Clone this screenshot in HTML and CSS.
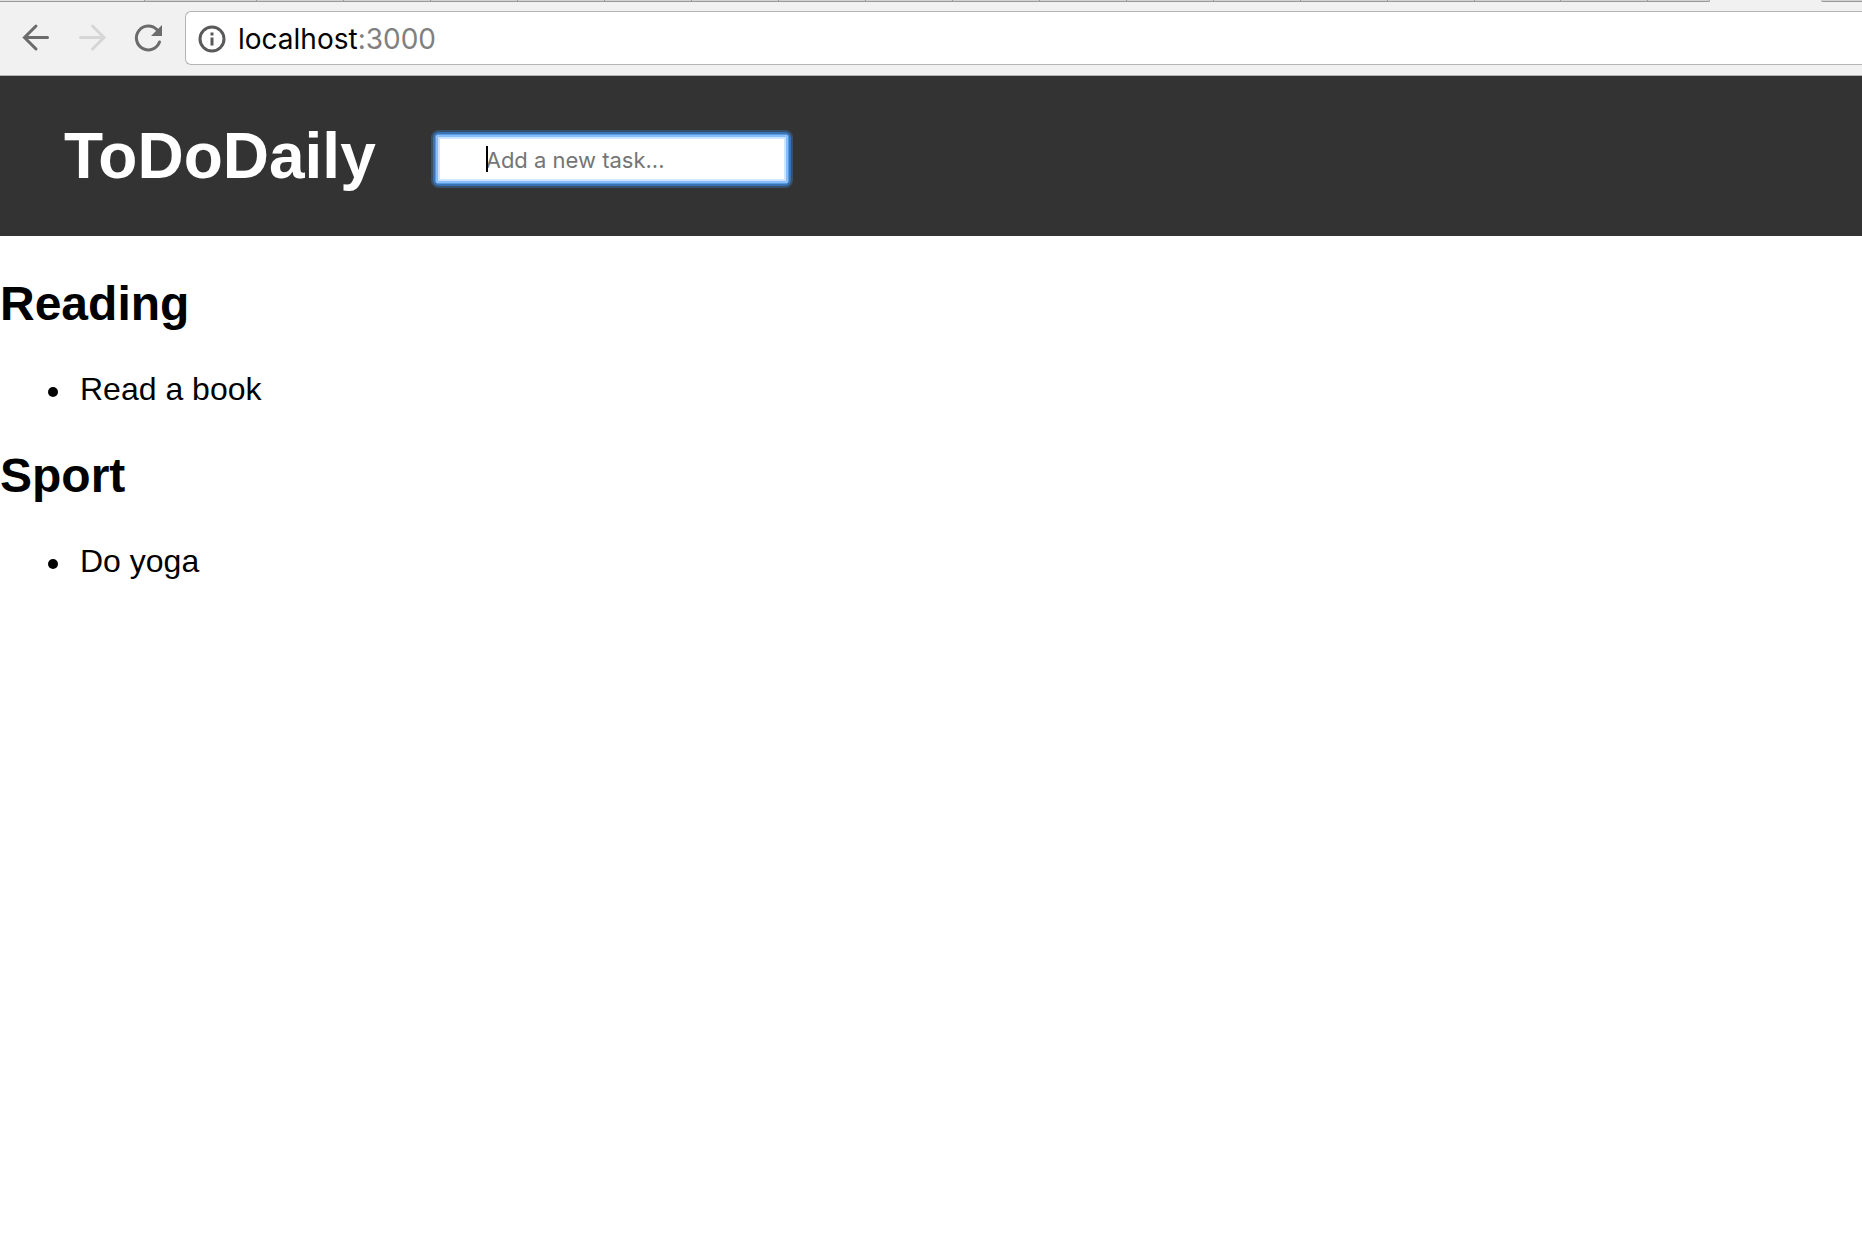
FILE: index.html
```html
<!DOCTYPE html>
<html lang="en">
<head>
<meta charset="utf-8">
<title>ToDoDaily</title>
<link rel="stylesheet" href="styles.css">
</head>
<body>
<div class="browser">
  <div class="tabs" aria-hidden="true">
    <span class="tab wide-first"></span><span class="tab wide"></span>
    <span class="tab"></span><span class="tab"></span><span class="tab"></span><span class="tab"></span>
    <span class="tab"></span><span class="tab"></span><span class="tab"></span><span class="tab"></span>
    <span class="tab"></span><span class="tab"></span><span class="tab"></span><span class="tab"></span>
    <span class="tab"></span><span class="tab"></span><span class="tab"></span><span class="tab"></span>
    <span class="tab short"></span><span class="tab active"></span><span class="tab rest"></span>
  </div>
  <div class="toolbar">
    <button class="tool" type="button" aria-label="Back">
      <svg viewBox="0 0 32 32"><path d="M27.500 15.500H5M16 4 4.500 15.500 16 27"/></svg>
    </button>
    <button class="tool" type="button" aria-label="Forward" disabled>
      <svg viewBox="0 0 32 32"><path d="M4.500 15.500H27M16.500 4 28 15.500 16.500 27"/></svg>
    </button>
    <button class="tool" type="button" aria-label="Reload">
      <svg viewBox="0 0 32 32"><path d="M27.500 20A11.900 11.900 0 1 1 25 7.800"/><path class="solid" d="M30 3v11H19z"/></svg>
    </button>
    <div class="address">
      <svg class="info" viewBox="0 0 28 28" aria-hidden="true"><circle cx="14" cy="14" r="12"/><path class="solid" d="M12.500 7.500h3v3h-3zM12.500 12.500h3v8h-3z"/></svg>
      <div class="url" role="textbox" aria-label="Address" contenteditable="true" spellcheck="false">localhost<span class="port">:3000</span></div>
    </div>
  </div>
</div>
<header class="header">
  <h1 class="brand">ToDoDaily</h1>
  <form class="new-task">
    <input class="task-input" type="text" aria-label="New task" placeholder="Add a new task..." autocomplete="off">
    <span class="caret"></span>
  </form>
</header>
<main>
  <h2 class="category">Reading</h2>
  <ul class="tasks"><li class="task">Read a book</li></ul>
  <h2 class="category">Sport</h2>
  <ul class="tasks"><li class="task">Do yoga</li></ul>
</main>
</body>
</html>
```
FILE: styles.css
```css
* { box-sizing: border-box; }

body {
  margin: 0;
  background: #fff;
  color: #000;
  font-family: "Liberation Sans", Arial, sans-serif;
  font-size: 32px;
}

/* Browser chrome */
.browser {
  background: #f1f1f1;
  border-bottom: 1px solid #b4b4b4;
  overflow: hidden;
}

.tabs { display: flex; height: 2px; }

.tab {
  flex: 87 1 0;
  background: #d2d2d2;
  border-right: 1px solid #999;
  border-bottom: 1px solid #999;
}

.wide-first { flex-grow: 146; background: #e3dfdf; }
.wide { flex-grow: 112; }
.short { flex-grow: 61; border-bottom-right-radius: 2px; }
.active { flex-grow: 113; background: none; border: 0; }
.rest { flex-grow: 41; border-right: 0; border-bottom-left-radius: 2px; }

.toolbar {
  display: flex;
  align-items: center;
  padding: 9px 0 10px 8px;
}

.tool {
  display: flex;
  flex: none;
  align-items: center;
  justify-content: center;
  width: 56px;
  height: 54px;
  padding: 0;
  border: 0;
  background: none;
  color: #6b6b6b;
}

.tool:disabled { color: #d6d6d6; }

.tool svg { width: 32px; height: 32px; }

svg {
  display: block;
  fill: none;
  stroke: currentColor;
  stroke-width: 3;
  stroke-linecap: round;
}

.solid { fill: currentColor; stroke: none; }

.address {
  display: flex;
  flex: 1;
  align-items: center;
  gap: 12px;
  height: 54px;
  margin-left: 9px;
  padding: 2px 0 0 12px;
  border: 1px solid #b4b4b4;
  border-right: 0;
  border-radius: 6px 0 0 6px;
  background: #fff;
}

.info { flex: none; width: 28px; height: 28px; color: #5a5a5a; }

.url {
  flex: 1;
  outline: 0;
  font-family: Inter, sans-serif;
  font-size: 28px;
  line-height: 36px;
}

.port { color: #808080; }

/* App header */
.header {
  display: flex;
  align-items: center;
  gap: 60px;
  height: 160px;
  padding: 0 64px;
  background: #333;
}

.brand {
  margin: 0;
  color: #fff;
  font-size: 64px;
  line-height: 74px;
}

.new-task { position: relative; display: flex; margin: 6px 0 0; }

.task-input {
  width: 352px;
  height: 48px;
  padding: 2px 50px 0;
  border: 0;
  outline: 0;
  border-radius: 3px;
  background: #fff;
  font-family: Inter, sans-serif;
  font-size: 22px;
  box-shadow:
    inset 0 0 0 2px #88bdf8,
    inset 0 0 0 4px #cfe4fd,
    0 0 0 1px #599ae0,
    0 0 0 3px #3a73b3,
    0 0 0 5px #36506c;
}

.task-input::placeholder { color: #757575; opacity: 1; }

.caret {
  position: absolute;
  top: 11px;
  left: 50px;
  width: 2px;
  height: 26px;
  background: #000;
}

/* Task lists */
.category {
  margin: 40px 0;
  font-size: 48px;
  line-height: 55px;
}

.tasks {
  margin: 32px 0;
  padding-left: 48px;
  line-height: 37px;
  list-style: none;
}

.task {
  display: flex;
  align-items: center;
  gap: 22px;
}

.task::before {
  content: "";
  width: 10px;
  height: 10px;
  margin-top: 4px;
  border-radius: 50%;
  background: currentColor;
}
```
